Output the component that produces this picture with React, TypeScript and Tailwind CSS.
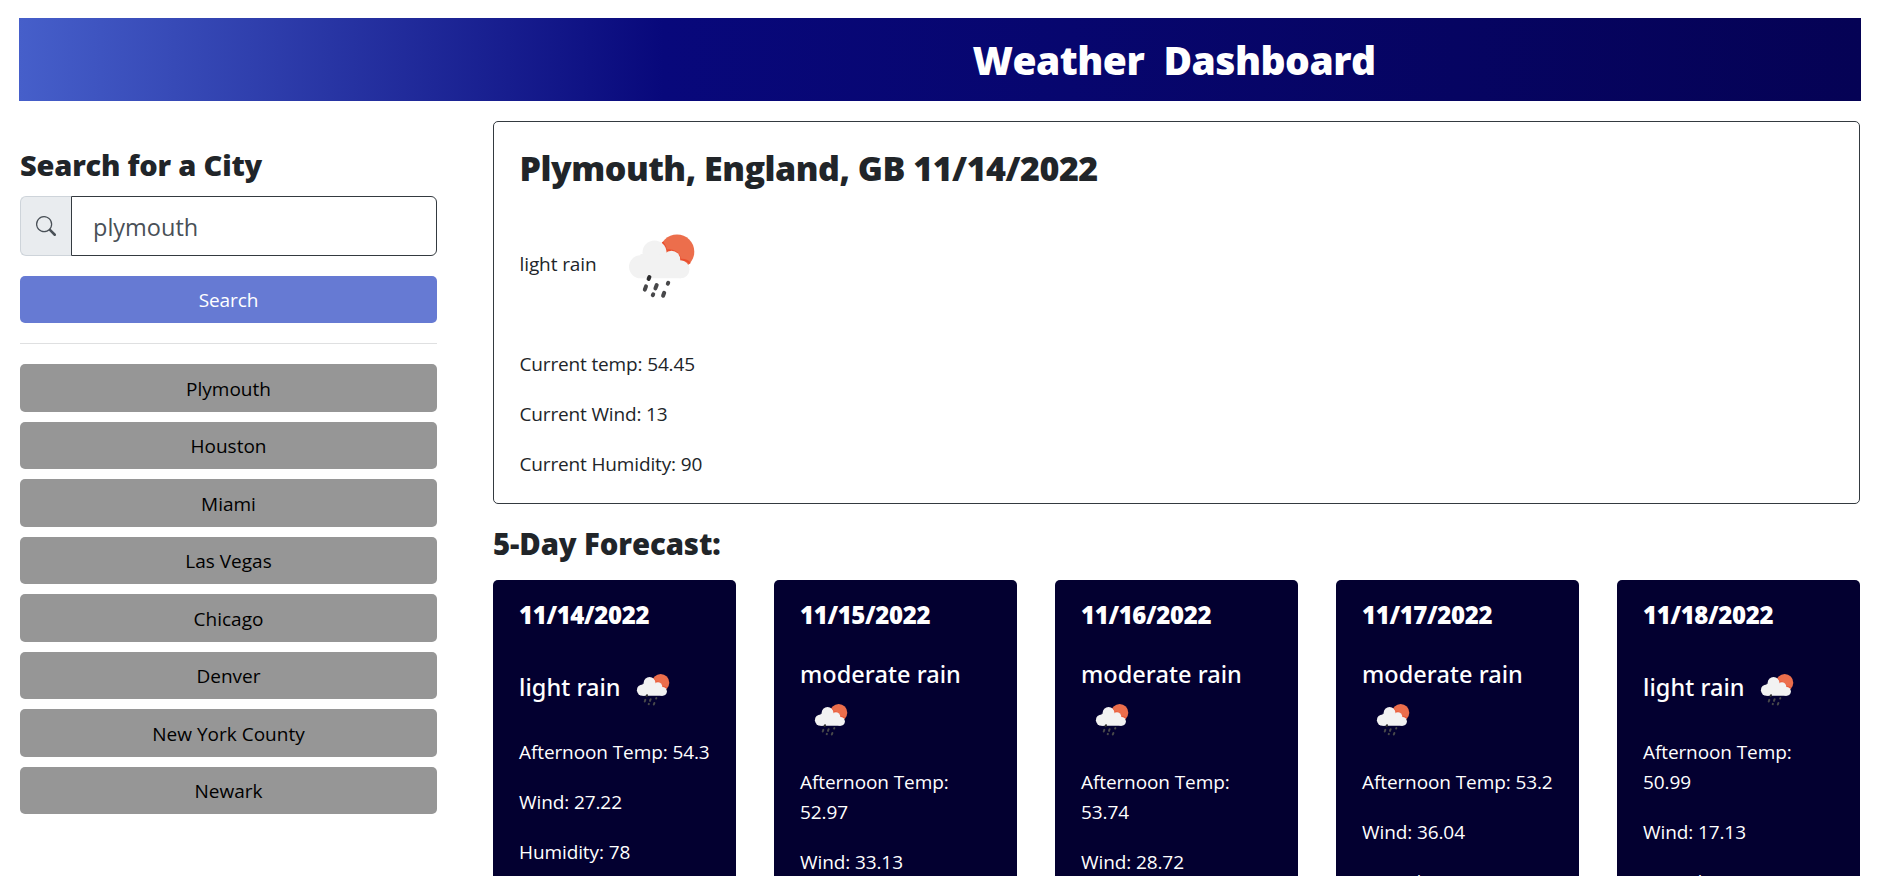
import { BsSearch } from "react-icons/bs";

const cities = ["Plymouth", "Houston", "Miami", "Las Vegas", "Chicago", "Denver", "New York County", "Newark"];

const forecast = [
  { date: "11/14/2022", sky: "light rain", temp: "54.3", wind: "27.22", humidity: "78" },
  { date: "11/15/2022", sky: "moderate rain", temp: "52.97", wind: "33.13", humidity: "76" },
  { date: "11/16/2022", sky: "moderate rain", temp: "53.74", wind: "28.72", humidity: "79" },
  { date: "11/17/2022", sky: "moderate rain", temp: "53.2", wind: "36.04", humidity: "76" },
  { date: "11/18/2022", sky: "light rain", temp: "50.99", wind: "17.13", humidity: "70" },
];

function RainIcon({ className }: { className: string }) {
  return (
    <svg viewBox="0 0 125 125" className={className} aria-hidden="true">
      <circle cx="74" cy="47.7" r="17.3" fill="#ec6e4c" />
      <g fill="none" stroke="#ea4f2e" strokeWidth="2">
        <path d="M59.5 38 Q62.5 42 63.2 46.5 Q74.5 45 77.5 55.8 Q84 55.5 87 59.5" />
      </g>
      <g fill="#f2f2f2">
        <circle cx="37.5" cy="62.8" r="11.5" />
        <circle cx="51.5" cy="48.4" r="12" />
        <circle cx="68.5" cy="55.5" r="8.7" />
        <circle cx="77.5" cy="65.3" r="9" />
        <path d="M37.5 74.3 V50 H56 L70 52 L78 60 V74.3 Z" />
      </g>
      <g stroke="#48484a" strokeWidth="4" strokeLinecap="round">
        <path d="M46.4 73 L45.6 75" stroke="#2c2c2e" />
        <path d="M43 82.3 L41.8 85.7" />
        <path d="M53.7 81 L52.4 84.4" />
        <path d="M65.2 78.9 L64.8 79.7" />
        <path d="M50.2 90.3 L49.8 91.1" />
        <path d="M61.2 88.8 L60.1 91.8" />
      </g>
    </svg>
  );
}

export default function App() {
  return (
    <div className="h-[876px] overflow-hidden bg-white pl-[19px] pr-[31px] pt-[18px] font-['Open_Sans',sans-serif] text-[19px] leading-[30px] tracking-[-0.1px] text-[#212529]">
      <header className="flex h-[83px] items-center justify-center bg-[linear-gradient(90deg,#465fca_0%,#08087b_35%,#050255_100%)] pl-[468px]">
        <h1 className="whitespace-pre pt-px text-[39px] font-extrabold leading-[48px] tracking-[-0.53px] text-white">
          {"Weather  Dashboard"}
        </h1>
      </header>

      <main className="flex items-start pl-px pr-px pt-5">
        <aside className="w-[417px] shrink-0 pt-[26px]">
          <h2 className="text-[29px] font-extrabold leading-9 tracking-[-0.2px]">Search for a City</h2>
          <div className="mt-[13px] flex h-[60px]">
            <span className="flex w-[51px] items-center justify-center rounded-l-md border border-r-0 border-[#ced4da] bg-[#e9ecef]">
              <BsSearch className="size-5 text-[#495057]" />
            </span>
            <div className="flex flex-1 items-center rounded-r-md border border-[#343a40] pl-[21px] pt-px text-[23.5px] tracking-normal text-[#495057]">
              plymouth
            </div>
          </div>
          <button className="mt-5 block h-[47px] w-full rounded-[5px] bg-[#667ad3] text-white">Search</button>
          <hr className="mb-5 mt-5 border-[#dfe0e1]" />
          <ul className="flex flex-col gap-2.5">
            {cities.map((city) => (
              <li key={city}>
                <button className="block h-[47.5px] w-full rounded-[5px] bg-[#969696] pt-0.5 tracking-normal text-black">{city}</button>
              </li>
            ))}
          </ul>
        </aside>

        <section className="ml-14 min-w-0 flex-1">
          <article className="h-[383px] rounded-[5px] border border-[#343a40] px-[25.5px] pt-[25px]">
            <h2 className="text-[34px] font-extrabold leading-[42px] tracking-[-0.49px]">
              Plymouth, England, GB 11/14/2022
            </h2>
            <div className="mt-[15px] flex h-[125px] items-center">
              <span className="pb-1.5">light rain</span>
              <RainIcon className="ml-[6px] size-[125px]" />
            </div>
            <div className="mt-5 flex flex-col gap-5 tracking-[-0.15px]">
              <p>Current temp: 54.45</p>
              <p>Current Wind: 13</p>
              <p>Current Humidity: 90</p>
            </div>
          </article>

          <h2 className="mt-[22px] text-[29.3px] font-extrabold leading-9 tracking-[-0.1px]">5-Day Forecast:</h2>

          <div className="mt-[18px] grid grid-cols-5 gap-[38px]">
            {forecast.map((day) => (
              <article key={day.date} className="h-[360px] rounded-[5px] bg-[#030030] pl-[26px] pr-5 pt-5 text-white">
                <h3 className="text-[24px] font-extrabold leading-[30px] tracking-[-0.36px]">{day.date}</h3>
                <div className="mt-[29px] flex flex-wrap items-center font-['Noto_Sans',sans-serif] text-[23.5px] font-medium tracking-[0.05px]">
                  <span className={day.sky === "light rain" ? "mr-px pb-1.5" : "mr-px"}>{day.sky}</span>
                  <RainIcon className="ml-[2px] size-[62px]" />
                </div>
                <div className="mt-4 flex flex-col gap-5">
                  <p>Afternoon Temp: {day.temp}</p>
                  <p>Wind: {day.wind}</p>
                  <p>Humidity: {day.humidity}</p>
                </div>
              </article>
            ))}
          </div>
        </section>
      </main>
    </div>
  );
}
